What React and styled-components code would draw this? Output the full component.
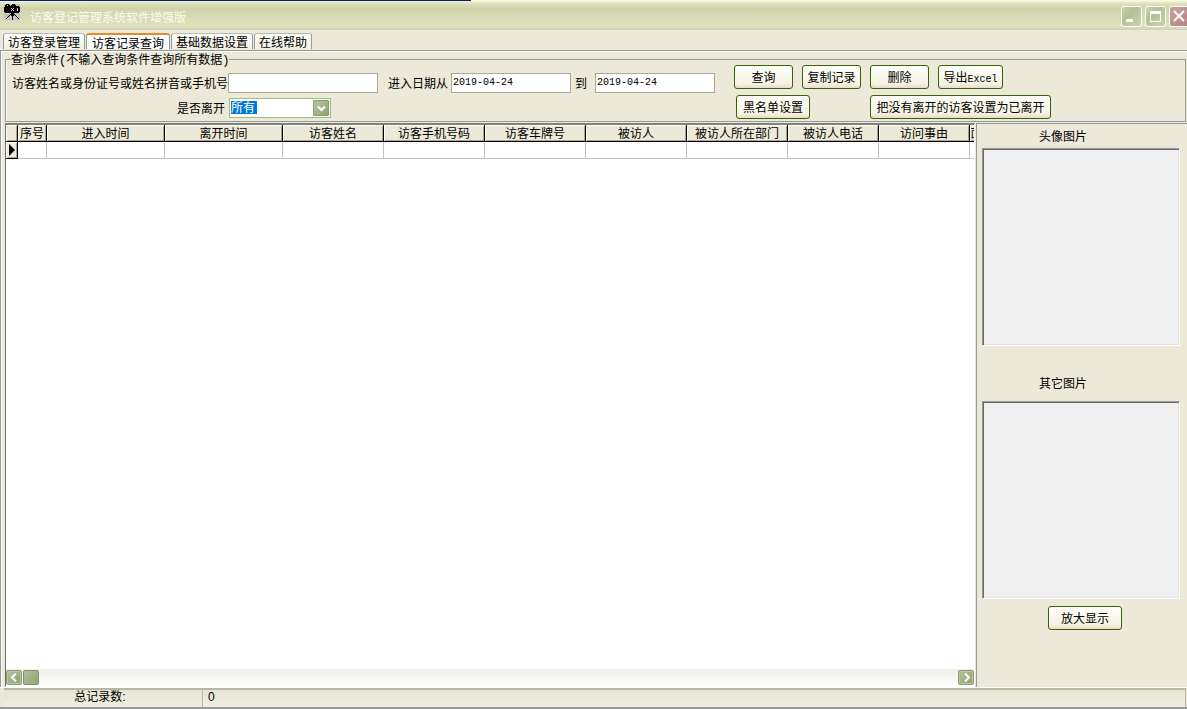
import React from "react";
import styled, { createGlobalStyle } from "styled-components";

const tabs = ["访客登录管理", "访客记录查询", "基础数据设置", "在线帮助"];

const columns = [
  { title: "序号", width: 29 },
  { title: "进入时间", width: 118 },
  { title: "离开时间", width: 118 },
  { title: "访客姓名", width: 101 },
  { title: "访客手机号码", width: 101 },
  { title: "访客车牌号", width: 101 },
  { title: "被访人", width: 101 },
  { title: "被访人所在部门", width: 101 },
  { title: "被访人电话", width: 91 },
  { title: "访问事由", width: 91 },
  { title: "面", width: 14 },
];

const AppIcon = () => (
  <svg width="17" height="17" viewBox="0 0 17 17" shapeRendering="crispEdges">
    <rect width="16" height="16" fill="#c3c3c3" />
    <path
      d="M2 0h3v1h1v1h1V1h1V0h3v1h1v1h3v1h1v5h-1v1H1V8H0V3h1V1h1z"
      fill="#000"
    />
    <path
      d="M7 9h3v3H9v4H8v-4H7zM6 10h1v1H6zM5 11h1v1H5zM4 12h1v1H4zM3 13h1v1H3zM2 14h1v1H2zM10 10h1v1h-1zM11 11h1v1h-1zM12 12h1v1h-1zM13 13h1v1h-1zM14 14h1v1h-1z"
      fill="#000"
    />
    <path
      d="M3 1h1v1H3zM7 4h1v1H7zM9 4h1v1H9zM8 5h1v1H8zM7 6h1v1H7zM9 6h1v1H9zM13 4h1v3h-1z"
      fill="#d8d8d8"
    />
  </svg>
);

const Arrow = ({ d }) => (
  <svg width="9" height="9" viewBox="0 0 9 9">
    <path d={d} fill="none" stroke="#fff" strokeWidth="2" />
  </svg>
);

const App = () => {
  const [active, setActive] = React.useState(1);
  const [name, setName] = React.useState("");
  const [from, setFrom] = React.useState("2019-04-24");
  const [to, setTo] = React.useState("2019-04-24");

  return (
    <Window>
      <GlobalStyle />
      <TitleBar>
        <AppIcon />
        <Title>访客登记管理系统软件增强版</Title>
        <CaptionButton aria-label="最小化">
          <svg width="19" height="19" viewBox="0 0 19 19">
            <path d="M4 12h7v3H4z" fill="#fff" />
          </svg>
        </CaptionButton>
        <CaptionButton aria-label="最大化">
          <svg width="19" height="19" viewBox="0 0 19 19">
            <path d="M4 4h11v11H4zM5 7v7h9V7z" fill="#fff" fillRule="evenodd" />
          </svg>
        </CaptionButton>
        <CaptionButton aria-label="关闭" $close>
          <svg width="19" height="19" viewBox="0 0 19 19">
            <path d="M4 4l10 10M14 4L4 14" stroke="#fff" strokeWidth="2" />
          </svg>
        </CaptionButton>
      </TitleBar>

      <TabList role="tablist">
        {tabs.map((tab, i) => (
          <Tab
            key={tab}
            role="tab"
            aria-selected={i === active}
            $active={i === active}
            onClick={() => setActive(i)}
          >
            {tab}
          </Tab>
        ))}
      </TabList>

      <Page>
        <Query>
          <legend>
            查询条件<Paren>(</Paren>不输入查询条件查询所有数据<Paren>)</Paren>
          </legend>
          <Fields>
            <FieldRow>
              <label htmlFor="visitor">访客姓名或身份证号或姓名拼音或手机号</label>
              <TextBox
                id="visitor"
                $width={150}
                value={name}
                onChange={(e) => setName(e.target.value)}
              />
              <DateLabel htmlFor="from">进入日期从</DateLabel>
              <TextBox
                id="from"
                $width={120}
                value={from}
                onChange={(e) => setFrom(e.target.value)}
              />
              <ToLabel htmlFor="to">到</ToLabel>
              <TextBox
                id="to"
                $width={120}
                value={to}
                onChange={(e) => setTo(e.target.value)}
              />
            </FieldRow>
            <FieldRow>
              <LeftLabel htmlFor="left">是否离开</LeftLabel>
              <SelectWrap>
                <Select id="left" defaultValue="所有">
                  <option>所有</option>
                  <option>是</option>
                  <option>否</option>
                </Select>
                <DropMark>
                  <Arrow d="M1 2.5l3.5 3.5L8 2.5" />
                </DropMark>
              </SelectWrap>
            </FieldRow>
          </Fields>
          <Actions>
            <Button>查询</Button>
            <Button>复制记录</Button>
            <Button>删除</Button>
            <Button>
              导出<Latin>Excel</Latin>
            </Button>
            <BlackListButton>黑名单设置</BlackListButton>
            <LeaveButton>把没有离开的访客设置为已离开</LeaveButton>
          </Actions>
        </Query>

        <Content>
          <GridPanel>
            <GridBody>
              <Grid>
                <colgroup>
                  <col style={{ width: 12 }} />
                  {columns.map((c) => (
                    <col key={c.title} style={{ width: c.width }} />
                  ))}
                </colgroup>
                <thead>
                  <tr>
                    <th />
                    {columns.map((c) => (
                      <th key={c.title}>{c.title}</th>
                    ))}
                  </tr>
                </thead>
                <tbody>
                  <tr>
                    <Indicator>
                      <svg width="6" height="12" viewBox="0 0 6 12">
                        <path d="M0 0l6 6-6 6z" fill="#000" />
                      </svg>
                    </Indicator>
                    {columns.map((c) => (
                      <td key={c.title} />
                    ))}
                  </tr>
                </tbody>
              </Grid>
            </GridBody>
            <ScrollBar>
              <ScrollButton aria-label="向左">
                <Arrow d="M6 0.5l-4 4 4 4" />
              </ScrollButton>
              <Thumb />
              <ScrollButton aria-label="向右">
                <Arrow d="M3 0.5l4 4-4 4" />
              </ScrollButton>
            </ScrollBar>
          </GridPanel>

          <Side>
            <Caption>头像图片</Caption>
            <Picture />
            <Caption $spaced>其它图片</Caption>
            <Picture />
            <ZoomButton>放大显示</ZoomButton>
          </Side>
        </Content>
      </Page>

      <StatusBar>
        <StatusCell $total>总记录数:</StatusCell>
        <StatusCell>0</StatusCell>
      </StatusBar>
    </Window>
  );
};

export default App;

const GlobalStyle = createGlobalStyle`
  * {
    box-sizing: border-box;
  }

  body {
    margin: 0;
    background: #ece9d8;
  }

  body, button, input, select {
    font-family: "Noto Sans CJK SC", sans-serif;
    font-size: 12px;
    line-height: 14px;
    color: #000;
  }
`;

const Window = styled.div`
  display: flex;
  flex-direction: column;
  min-height: 100vh;
  overflow: hidden;
  background: #ece9d8;
`;

const TitleBar = styled.header`
  display: flex;
  align-items: center;
  gap: 3px;
  height: 30px;
  padding: 4px 0 1px 4px;
  background:
    linear-gradient(90deg, #0a246a, #002a50) 0 0 / 471px 1px no-repeat,
    linear-gradient(#fffde6 0, #e3e4c5 3px, #d0d3aa 8px, #d9dbb6 18px, #dfe0bd 26px, #cfd0b2 30px);

  > svg {
    flex: none;
    align-self: flex-start;
  }
`;

const Title = styled.h1`
  flex: 1;
  margin: 0 0 0 6px;
  font-size: 12px;
  font-weight: normal;
  line-height: 18px;
  color: #fafbee;
`;

const CaptionButton = styled.button`
  flex: none;
  width: 21px;
  height: 21px;
  padding: 0;
  border: 1px solid #fff;
  border-radius: 3px;
  background: ${(props) =>
    props.$close
      ? "linear-gradient(135deg, #c9a09c, #b58589)"
      : "linear-gradient(135deg, #c8d2ac, #b3c197 40%, #c9d5b0)"};

  svg {
    display: block;
  }

  &:last-child {
    margin-right: -3px;
  }
`;

const TabList = styled.nav`
  display: flex;
  align-items: flex-end;
  gap: 1px;
  height: 20px;
  padding: 0 3px 1px;
`;

const Tab = styled.button`
  height: 16px;
  padding: ${(props) => (props.$active ? "0 5px" : "0 4px")};
  border: 1px solid #919b9c;
  border-color: ${(props) =>
    props.$active ? "#e68b2c #919b9c" : "#b3bfae #919b9c"};
  border-top-width: ${(props) => (props.$active ? "2px" : "1px")};
  border-bottom: 0;
  border-radius: 3px 3px 0 0;
  background: ${(props) =>
    props.$active ? "#fcfcfe" : "linear-gradient(#fff, #f1efe0)"};
  line-height: 13px;
  white-space: nowrap;
`;

const Page = styled.main`
  display: flex;
  flex: 1;
  flex-direction: column;
  padding: 1px 0 0 4px;
  border-top: 1px solid #919b9c;
  border-left: 1px solid #919b9c;
  box-shadow: inset 1px 1px 0 #fff;
`;

const Query = styled.fieldset`
  display: flex;
  min-width: 0;
  height: 70px;
  margin: 0 1px 1px 0;
  padding: 0 0 0 6px;
  border: 1px solid #919b9c;
  box-shadow: inset 1px 0 0 #fff;

  legend {
    margin-left: -1px;
    padding: 0;
    line-height: 14px;
  }
`;

const Fields = styled.div`
  display: flex;
  flex: none;
  flex-direction: column;
  gap: 5px;
  padding-top: 7px;
`;

const FieldRow = styled.div`
  display: flex;
  align-items: center;
  white-space: nowrap;
`;

const DateLabel = styled.label`
  margin: 0 3px 0 10px;
`;

const ToLabel = styled.label`
  margin: 0 8px 0 4px;
`;

const LeftLabel = styled.label`
  width: 213px;
  margin-right: 4px;
  text-align: right;
`;

const TextBox = styled.input`
  width: ${(props) => props.$width}px;
  height: 20px;
  padding: 0 1px 2px;
  border: 1px solid #aca899;
  background: #fff;
  font-family: "Liberation Mono", "Noto Sans CJK SC", monospace;
  font-size: 10px;
`;

const SelectWrap = styled.div`
  position: relative;
`;

const Select = styled.select`
  display: block;
  width: 102px;
  height: 20px;
  padding: 0 20px 2px 1px;
  border: 1px solid #a5b97f;
  border-radius: 0;
  appearance: none;
  background: linear-gradient(#0078d7, #0078d7) 1px 2px / 26px 13px no-repeat #fff;
  color: #fff;

  option {
    color: #000;
  }
`;

const DropMark = styled.span`
  position: absolute;
  top: 2px;
  right: 2px;
  display: grid;
  place-items: center;
  width: 16px;
  height: 16px;
  border: 1px solid #8b9b70;
  border-radius: 1px;
  background: linear-gradient(135deg, #b7c79d, #8fa273);
  pointer-events: none;
`;

const Actions = styled.div`
  display: grid;
  flex: 1;
  grid-template-columns: 59px 59px 59px 65px 1fr;
  align-content: start;
  gap: 6px 9px;
  margin-top: -1px;
  padding-left: 19px;
`;

const Button = styled.button`
  height: 24px;
  padding: 0;
  border: 1px solid #37620a;
  border-radius: 3px;
  background: linear-gradient(#fffffa, #f6f3e3 80%, #ebd9c9);
  white-space: nowrap;
`;

const Latin = styled.span`
  font-family: "Liberation Mono", monospace;
  font-size: 10px;
  line-height: 0;
`;

const Paren = styled.span`
  font-family: "Liberation Mono", monospace;
  line-height: 0;
`;

const BlackListButton = styled(Button)`
  grid-column: 1 / 3;
  width: 74px;
  margin-left: 2px;
`;

const LeaveButton = styled(Button)`
  grid-column: 3 / -1;
  width: 181px;
`;

const Content = styled.div`
  display: flex;
  flex: 1;
`;

const GridPanel = styled.section`
  display: flex;
  flex: 1;
  flex-direction: column;
  min-width: 0;
  border: 1px solid #fff;
  border-top: 2px solid #808080;
  border-left: 1px solid #716f64;
  background: #fff;
`;

const GridBody = styled.div`
  flex: 1;
  overflow: hidden;
`;

const Grid = styled.table`
  width: 978px;
  border-collapse: separate;
  border-spacing: 0;
  table-layout: fixed;

  th,
  td {
    height: 17px;
    padding: 0;
    border-right: 1px solid #c0c0c0;
    border-bottom: 1px solid #c0c0c0;
    font-weight: normal;
    line-height: 14px;
    white-space: nowrap;
    overflow: hidden;
  }

  th {
    border-color: #000;
    background: #ece9d8;
    box-shadow: inset 1px 1px 0 #fff, inset -1px -1px 0 #aca899;
  }
`;

const Indicator = styled.td`
  && {
    padding-left: 3px;
    border-color: #000;
    background: #ece9d8;
    box-shadow: inset 1px 1px 0 #fff, inset -1px -1px 0 #aca899;
  }

  svg {
    display: block;
  }
`;

const ScrollBar = styled.div`
  display: flex;
  align-items: center;
  height: 17px;
  background: linear-gradient(#f1efe9, #fefefb);

  > :last-child {
    margin-left: auto;
  }
`;

const ScrollButton = styled.button`
  display: grid;
  place-items: center;
  width: 16px;
  height: 15px;
  padding: 0;
  border: 1px solid #8c9c73;
  border-radius: 2px;
  background: linear-gradient(135deg, #b4c49b, #8ca070);
  box-shadow: inset 0 0 0 1px #b9c7a4;
`;

const Thumb = styled.div`
  width: 16px;
  height: 15px;
  margin-left: 1px;
  border: 1px solid #82936a;
  border-radius: 2px;
  background: linear-gradient(135deg, #b0c095, #92a578);
`;

const Side = styled.aside`
  display: flex;
  flex: none;
  flex-direction: column;
  width: 211px;
  margin-left: 1px;
  padding: 5px 7px 0 5px;
  border-top: 1px solid #919b9c;
  border-left: 1px solid #919b9c;
`;

const Caption = styled.h2`
  margin: ${(props) => (props.$spaced ? "30px 0 11px" : "0 0 5px")};
  padding-right: 36px;
  font-size: 12px;
  font-weight: normal;
  line-height: 14px;
  text-align: center;
`;

const Picture = styled.div`
  height: 198px;
  border: 1px solid;
  border-color: #9a9a94 #fff #fff #9a9a94;
  background: #f0f0f0;
  box-shadow: inset 1px 1px 0 #696969, inset -1px -1px 0 #e3e3e3;
`;

const ZoomButton = styled(Button)`
  align-self: center;
  width: 74px;
  margin: 7px 0 0 8px;
`;

const StatusBar = styled.footer`
  display: flex;
  height: 22px;
  padding: 0 1px 0 4px;
  border-top: 1px solid #fff;
  border-bottom: 2px solid #919b9c;
  font-family: "Liberation Sans", "Noto Sans CJK SC", sans-serif;
`;

const StatusCell = styled.div`
  flex: ${(props) => (props.$total ? "none" : "1")};
  width: ${(props) => (props.$total ? "199px" : "auto")};
  padding: ${(props) => (props.$total ? "0 6px 0 0" : "0 0 0 5px")};
  border-top: 2px solid #b9b7a2;
  border-right: 1px solid #b9b7a2;
  background: linear-gradient(#e6e4d3, #f0eee0);
  line-height: 14px;
  text-align: ${(props) => (props.$total ? "center" : "left")};
`;
